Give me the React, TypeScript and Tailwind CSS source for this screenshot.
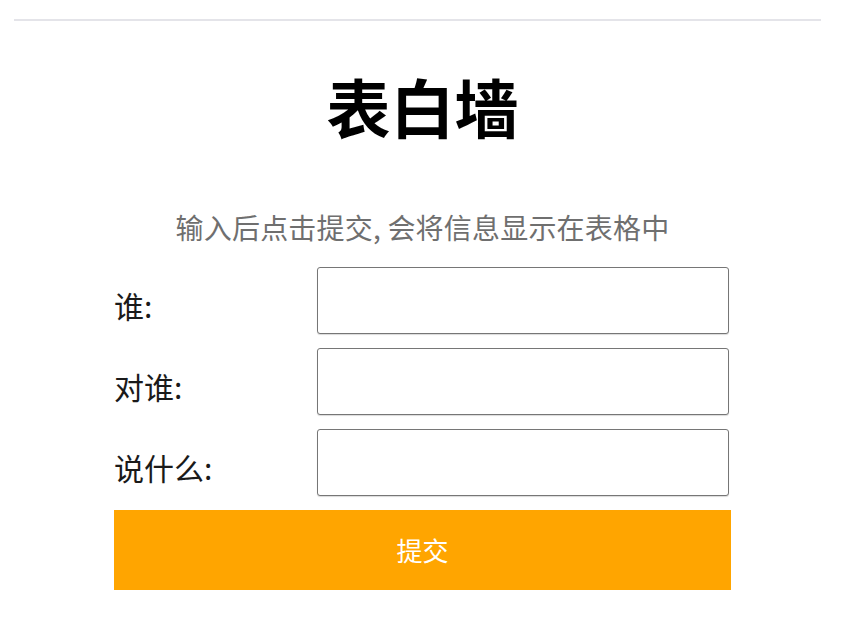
import React from 'react';

const cjk = "font-['Noto_Sans_CJK_SC','Noto_Sans',sans-serif]";

const fields = [
  { id: 'from', label: '谁:' },
  { id: 'to', label: '对谁:' },
  { id: 'message', label: '说什么:' },
];

export default function App() {
  return (
    <div className={`min-h-screen bg-white pr-[9px] pt-[19px] ${cjk}`}>
      <div className="ml-[14px] h-[2px] w-[807px] bg-[#e4e4e9]" />

      <h1 className="mt-[52px] text-center text-[64px] font-bold leading-[64px] text-black">
        表白墙
      </h1>

      <p className="mt-[76px] text-center text-[28px] leading-[28px] tracking-[0.2px] text-[#6f6f6f]">
        输入后点击提交, 会将信息显示在表格中
      </p>

      <form
        className="mx-auto mt-[26px] flex w-[617px] flex-col gap-[14px]"
        onSubmit={(e) => e.preventDefault()}
      >
        {fields.map((f) => (
          <div key={f.id} className="flex items-center">
            <label
              htmlFor={f.id}
              className="mt-[9px] w-[203px] text-[30px] leading-[30px] text-[#1a1a1a]"
            >
              {f.label}
            </label>
            <input
              id={f.id}
              type="text"
              className="h-[67px] w-[412px] rounded-[3px] border border-[#767676] bg-white px-2 text-[24px] shadow-[0_1px_1px_rgba(0,0,0,0.15)] outline-none"
            />
          </div>
        ))}
        <button
          type="submit"
          className="h-[80px] w-full bg-[#ffa500] text-[26px] leading-[26px] text-white"
        >
          提交
        </button>
      </form>
    </div>
  );
}
